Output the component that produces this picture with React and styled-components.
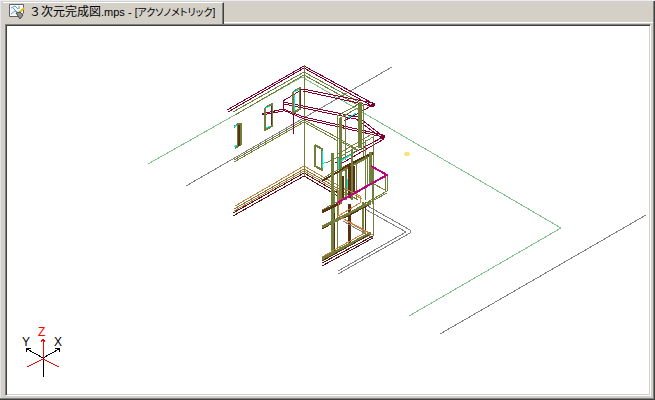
import React from 'react'
import styled, { createGlobalStyle } from 'styled-components'

const GlobalStyle = createGlobalStyle`
    body {
        margin: 0;
        background: #d4d0c8;
    }
`

const C = {
    wine: '#80002c',
    dark: '#581018',
    olive: '#70803c',
    brown: '#583010',
    orange: '#c88040',
    gray: '#808084',
    green: '#80c48c',
    cyan: '#00f0f0',
    magenta: '#c00080',
}

// [color, points, stroke width]
const site = [
    [C.green, '148,164 302,77 561,228 409,316'],
    [C.gray, '392,67 186,186'],
    [C.gray, '646,215 440,334'],
    [C.gray, '338,271 406,232 365,209'],
    [C.gray, '338,274 410,233 410,230 366,205'],
]

const floor = [
    [C.orange, '235,206 304,166 362,199'],
    [C.olive, '234,209 304,169 358,200'],
    [C.orange, '234,211 304,171 352,199'],
    [C.dark, '233,213 304,173 340,194'],
    [C.dark, '233,216 304,176 338,196'],
]

const roof = [
    [C.wine, '227,110 304,66 374,104'],
    [C.wine, '228,112 304,68 372,106'],
    [C.olive, '233,112 304,72 361,103'],
    [C.olive, '235,115 304,75 358,105'],
    [C.olive, '234,160 304,120 340,139'],
    [C.olive, '234,162 304,122 338,141'],
    [C.olive, '304,65 304,176'],
    [C.wine, '283,101 303,89 373,103'],
    [C.wine, '303,91 372,106'],
    [C.wine, '283,101 283,110 304,119 383,137'],
    [C.wine, '283,109 304,117 383,135'],
    [C.wine, '283,102 358,117 384,137'],
    [C.wine, '284,104 356,119 383,139'],
    [C.wine, '262,114 283,109'],
    [C.wine, '262,115 283,111'],
    [C.wine, '293,115 293,134'],
    [C.wine, '373,105 344,121'],
    [C.wine, '383,137 335,163'],
    [C.wine, '384,139 337,166'],
]

const tower = [
    [C.olive, '337,200 337,116 361,103 361,150'],
    [C.olive, '340,118 363,105 363,160'],
    [C.olive, '340,118 340,204', 3],
    [C.olive, '359,104 359,148', 3],
    [C.olive, '345,114 345,160'],
    [C.olive, '338,158 373,137 373,236'],
    [C.olive, '338,154 372,134'],
    [C.olive, '338,138 358,150 338,161'],
    [C.olive, '340,141 356,150'],
    [C.cyan, '348,118 356,113'],
    [C.cyan, '341,161 354,153'],
    [C.cyan, '338,158 338,170'],
    [C.brown, '322,181 345,168', 2],
    [C.brown, '342,169 373,153', 3],
    [C.olive, '323,178 345,166'],
    [C.olive, '340,172 368,157', 2],
    [C.brown, '343,176 343,200', 2],
    [C.olive, '346,168 346,200', 2],
    [C.brown, '349,166 349,198', 3],
    [C.olive, '352,150 352,200', 2],
    [C.brown, '354,166 354,194', 2],
    [C.cyan, '347,179 347,190'],
    [C.olive, '356,164 356,200'],
    [C.olive, '365,140 365,200'],
    [C.olive, '367,156 367,186'],
    [C.olive, '370,152 370,184', 3],
    [C.olive, '332,153 332,213', 3],
    [C.olive, '333,190 333,254', 4],
    [C.brown, '334,213 334,254'],
    [C.brown, '349,204 349,243', 3],
    [C.olive, '363,202 363,232', 2],
    [C.brown, '365,202 365,232'],
    [C.olive, '337,200 337,250'],
    [C.brown, '322,212 340,203', 3],
    [C.olive, '322,210 370,184'],
    [C.brown, '322,228 338,219', 3],
    [C.olive, '322,227 371,203', 3],
    [C.brown, '342,219 369,205'],
    [C.olive, '372,168 372,204'],
    [C.olive, '387,175 387,191 340,218'],
    [C.olive, '385,176 385,190 372,183'],
    [C.olive, '387,193 352,212'],
    [C.orange, '337,215 373,235'],
    [C.orange, '338,190 338,216 360,203 360,196 344,188'],
    [C.gray, '343,221 373,238'],
    [C.orange, '322,257 366,232 345,220'],
    [C.olive, '322,259 371,233', 3],
    [C.brown, '322,261 369,235'],
    [C.dark, '322,263 373,236'],
    [C.dark, '322,266 373,238'],
    [C.magenta, '371,166 387,175 337,203', 2],
]

const windows = [
    [C.olive, '234,127 238,124 241,124 241,144 235,148', 2],
    [C.olive, '238,125 238,145', 2],
    [C.brown, '239,125 239,146', 2],
    [C.cyan, '234,127 237,125'],
    [C.cyan, '234,147 237,145'],
    [C.olive, '265,108 272,104 272,126 265,130 265,108', 2],
    [C.brown, '271,106 271,125'],
    [C.cyan, '266,108 270,106'],
    [C.cyan, '266,128 270,126'],
    [C.olive, '293,92 300,88 300,109 293,113 293,92', 2],
    [C.brown, '300,89 300,108'],
    [C.cyan, '294,95 294,111'],
    [C.cyan, '294,92 299,89'],
    [C.olive, '315,145 322,149 322,170 315,166 315,145', 2],
    [C.cyan, '322,151 322,168'],
    [C.cyan, '322,164 326,162'],
    [C.olive, '326,163 338,157'],
]

const axes = [
    ['#000', '43,358 43,377'],
    ['#000', '27,349 43,358 59,349'],
    ['#000', '26,352 26,348 31,348'],
    ['#000', '55,348 59,348 59,352'],
    ['#f00', '27,367 43,359 59,367'],
    ['#f00', '43,358 43,339'],
    ['#f00', '41,342 43,339 45,342'],
]

function Lines({ items }) {
    return items.map(([color, points, width = 1]) => (
        <polyline key={color + points} points={points} stroke={color} strokeWidth={width} />
    ))
}

function DocumentIcon() {
    return (
        <svg width="17" height="17" viewBox="0 0 17 17" aria-hidden="true">
            <path d="M1.5 .5H15.5V9L12 12.5H1.5Z" fill="#f4f8ff" stroke="#606060" />
            <path d="M3 4L7 2L10 5M3 10L7 7L11 9M5 4L9 8M11 2V5" fill="none" stroke="#6898b8" />
            <path d="M16 4L11 9" stroke="#e8c000" strokeWidth="2" />
            <path d="M8 9L12 15L15 11L12 8Z" fill="#909090" stroke="#505050" />
        </svg>
    )
}

function App() {
    return (
        <Window>
            <GlobalStyle />
            <TabBar role="tablist">
                <Tab type="button" role="tab" aria-selected="true">
                    <DocumentIcon />
                    <Title>
                        ３次元完成図<Extension>.mps - </Extension>
                        <ViewName>[アクソノメトリック]</ViewName>
                    </Title>
                </Tab>
            </TabBar>
            <Viewport>
                <Drawing viewBox="7 26 642 368" role="img" aria-label="アクソノメトリック">
                    <Lines items={site} />
                    <Lines items={floor} />
                    <Lines items={roof} />
                    <Lines items={windows} />
                    <Lines items={tower} />
                    <circle cx="373" cy="105" r="2" fill={C.wine} />
                    <circle cx="383" cy="137" r="2" fill={C.wine} />
                    <ellipse cx="407" cy="154" rx="3" ry="2" fill="#ffe080" />
                    <Lines items={axes} />
                    <AxisLabel x="22" y="346">Y</AxisLabel>
                    <AxisLabel x="54" y="346">X</AxisLabel>
                    <AxisLabel x="38" y="336" $color="#f00">Z</AxisLabel>
                </Drawing>
            </Viewport>
        </Window>
    )
}

const Window = styled.main`
    box-sizing: border-box;
    min-height: 100vh;
    display: flex;
    flex-direction: column;
    padding: 0 2px 2px 5px;
    background: #d4d0c8;
    border-top: 1px solid #e8ecf4;
    box-shadow: inset -1px -1px #404040, inset -2px -2px #808080, inset 1px 0 #e0e4ec;
`

const TabBar = styled.div`
    display: flex;
    height: 23px;
    margin-left: -2px;
    box-shadow: inset 0 -1px #d4d0c8, inset 0 -2px #fff;
`

const Tab = styled.button`
    display: flex;
    align-items: center;
    gap: 4px;
    height: 22px;
    margin-top: 1px;
    padding: 0 8px 2px 5px;
    background: #d4d0c8;
    border: 0;
    border-top: 1px solid #fff;
    border-right: 1px solid #404040;
    box-shadow: inset -1px 0 #808080;
    color: #000;
`

const Title = styled.span`
    font: 12px/16px 'Liberation Sans', 'Noto Sans CJK JP', sans-serif;
    white-space: nowrap;
`

const Extension = styled.span`
    font-size: 11px;
    white-space: pre;
`

const ViewName = styled.span`
    font-size: 10px;
    font-feature-settings: 'palt';
`

const Viewport = styled.section`
    flex: 1;
    display: flex;
    margin: 0 2px 2px 0;
    background: #fff;
    border: 1px solid;
    border-color: #808080 #fff #fff #808080;
    box-shadow: inset 1px 1px #404040, inset -1px -1px #d4d0c8;
    padding: 1px;
`

const Drawing = styled.svg`
    width: 100%;
    fill: none;
    shape-rendering: crispEdges;
`

const AxisLabel = styled.text`
    font: 12px 'Liberation Sans', sans-serif;
    fill: ${props => props.$color || '#000'};
`

export default App
